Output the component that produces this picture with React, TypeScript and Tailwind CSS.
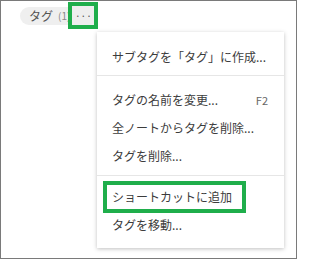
import React from "react";

const font = { fontFamily: '"Noto Sans CJK JP", "Noto Sans", sans-serif' };

function Item({ label, hint }: { label: string; hint?: string }) {
  return (
    <div className="flex h-[28px] items-center justify-between pl-[15px] pr-[16px] text-[12px] text-[#3c3c3c]">
      <span>{label}</span>
      {hint && <span className="text-[11px] text-[#666]">{hint}</span>}
    </div>
  );
}

export default function App() {
  return (
    <div
      className="relative h-[259px] w-[297px] overflow-hidden border border-[#7a7a7a] bg-white"
      style={font}
    >
      <div className="flex items-center pl-[19px] pt-[1px]">
        <div className="flex h-[18px] items-center rounded-full bg-[#efefef] pl-[9px] pr-[8px] text-[12px] leading-none text-[#555]">
          <span>タグ</span>
          <span className="ml-[5px] text-[10px] text-[#888]">(1)</span>
        </div>
        <div className="-ml-[10px] flex h-[27px] w-[30px] items-center justify-center border-[4px] border-[#1fae4b] bg-white">
          <div className="flex h-full w-full items-center justify-center bg-[#eeeeee] text-[10px] leading-none text-[#555]">
            ···
          </div>
        </div>
      </div>

      <div className="absolute left-[96px] top-[31px] w-[187px] bg-white pb-[9px] pt-[11px] shadow-[0_1px_4px_rgba(0,0,0,0.25)]">
        <Item label="サブタグを「タグ」に作成..." />
        <div className="mb-[10px] mt-[4px] h-px bg-[#e6e6e6]" />
        <Item label="タグの名前を変更..." hint="F2" />
        <Item label="全ノートからタグを削除..." />
        <Item label="タグを削除..." />
        <div className="mb-[7px] mt-[5px] h-px bg-[#e6e6e6]" />
        <div className="relative">
          <Item label="ショートカットに追加" />
          <div className="pointer-events-none absolute -top-[2px] left-[6px] h-[32px] w-[143px] border-[4px] border-[#1fae4b]" />
        </div>
        <Item label="タグを移動..." />
      </div>
    </div>
  );
}
